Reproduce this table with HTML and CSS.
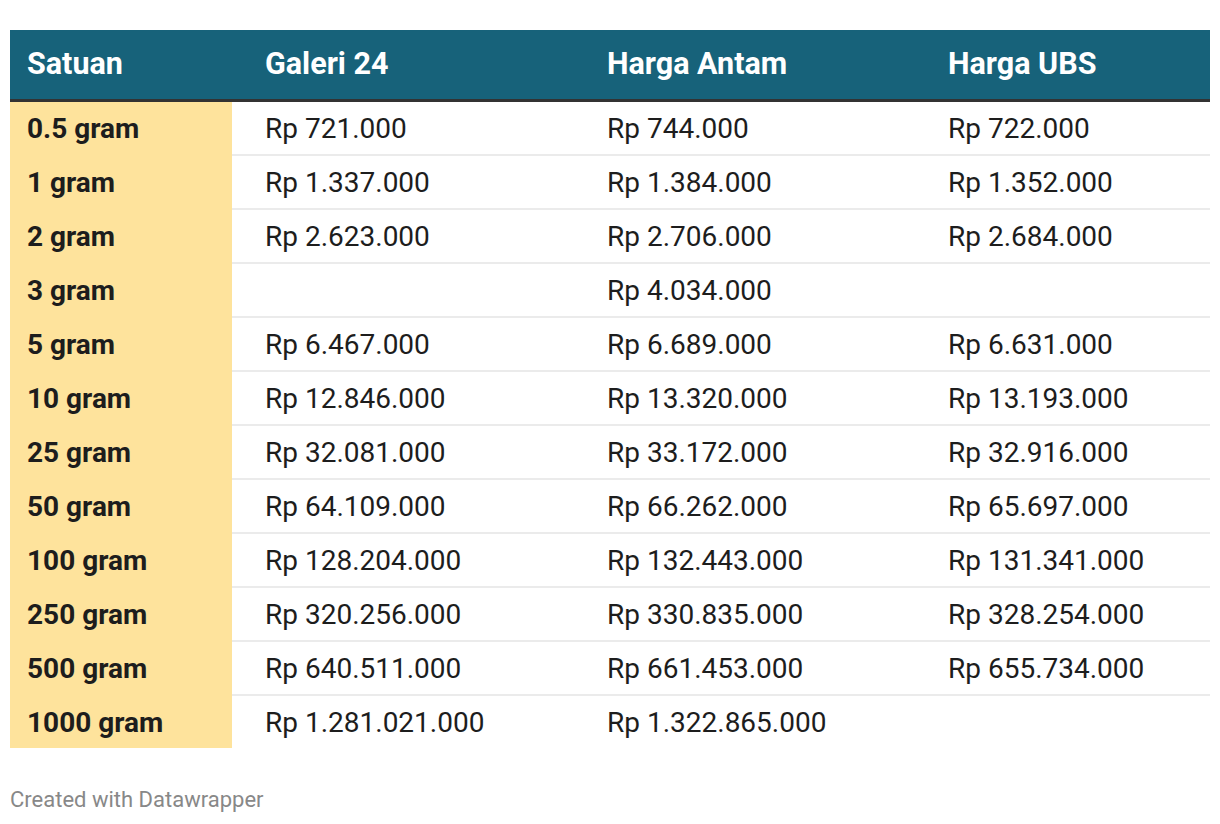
FILE: index.html
```html
<!DOCTYPE html>
<html lang="id">
<head>
<meta charset="utf-8">
<title>Harga Emas</title>
<link rel="stylesheet" href="styles.css">
</head>
<body>
<div class="chart">
  <div class="table">
    <div class="row head">
      <div class="cell first">Satuan</div>
      <div class="cell">Galeri 24</div>
      <div class="cell">Harga Antam</div>
      <div class="cell">Harga UBS</div>
    </div>
    <div class="row"><div class="cell first">0.5 gram</div><div class="cell">Rp 721.000</div><div class="cell">Rp 744.000</div><div class="cell">Rp 722.000</div></div>
    <div class="row"><div class="cell first">1 gram</div><div class="cell">Rp 1.337.000</div><div class="cell">Rp 1.384.000</div><div class="cell">Rp 1.352.000</div></div>
    <div class="row"><div class="cell first">2 gram</div><div class="cell">Rp 2.623.000</div><div class="cell">Rp 2.706.000</div><div class="cell">Rp 2.684.000</div></div>
    <div class="row"><div class="cell first">3 gram</div><div class="cell"></div><div class="cell">Rp 4.034.000</div><div class="cell"></div></div>
    <div class="row"><div class="cell first">5 gram</div><div class="cell">Rp 6.467.000</div><div class="cell">Rp 6.689.000</div><div class="cell">Rp 6.631.000</div></div>
    <div class="row"><div class="cell first">10 gram</div><div class="cell">Rp 12.846.000</div><div class="cell">Rp 13.320.000</div><div class="cell">Rp 13.193.000</div></div>
    <div class="row"><div class="cell first">25 gram</div><div class="cell">Rp 32.081.000</div><div class="cell">Rp 33.172.000</div><div class="cell">Rp 32.916.000</div></div>
    <div class="row"><div class="cell first">50 gram</div><div class="cell">Rp 64.109.000</div><div class="cell">Rp 66.262.000</div><div class="cell">Rp 65.697.000</div></div>
    <div class="row"><div class="cell first">100 gram</div><div class="cell">Rp 128.204.000</div><div class="cell">Rp 132.443.000</div><div class="cell">Rp 131.341.000</div></div>
    <div class="row"><div class="cell first">250 gram</div><div class="cell">Rp 320.256.000</div><div class="cell">Rp 330.835.000</div><div class="cell">Rp 328.254.000</div></div>
    <div class="row"><div class="cell first">500 gram</div><div class="cell">Rp 640.511.000</div><div class="cell">Rp 661.453.000</div><div class="cell">Rp 655.734.000</div></div>
    <div class="row last"><div class="cell first">1000 gram</div><div class="cell">Rp 1.281.021.000</div><div class="cell">Rp 1.322.865.000</div><div class="cell"></div></div>
  </div>
  <div class="footer">Created with Datawrapper</div>
</div>
</body>
</html>
```
FILE: styles.css
```css
* { box-sizing: border-box; }
html, body { margin: 0; padding: 0; background: #fff; }
body { font-family: Roboto, "Liberation Sans", sans-serif; color: #1d1d1d; }
.chart { padding: 30px 10px 0 10px; width: 1220px; }
.table { display: flex; flex-direction: column; }
.row {
  display: grid;
  grid-template-columns: 222px 342px 341px 295px;
  height: 54px;
  border-bottom: 2px solid #ebebeb;
  font-size: 28px;
}
.row.last { border-bottom: none; height: 52px; }
.cell {
  display: flex;
  align-items: center;
  padding-left: 33px;
  white-space: nowrap;
}
.cell.first {
  padding-left: 17px;
  padding-bottom: 2px;
  font-weight: 700;
  background: #fee39c;
  margin-bottom: -2px;
}
.row.last .cell.first { margin-bottom: 0; padding-bottom: 0; }
.row.head {
  height: 72px;
  background: #17627a;
  color: #fff;
  border-bottom: 3px solid #333;
  font-size: 30.5px;
  font-weight: 700;
}
.row.head .cell { padding-bottom: 2px; }
.row.head .cell.first { background: transparent; margin-bottom: 0; }
.footer {
  margin-top: 39px;
  font-size: 22px;
  color: #888;
}
```
